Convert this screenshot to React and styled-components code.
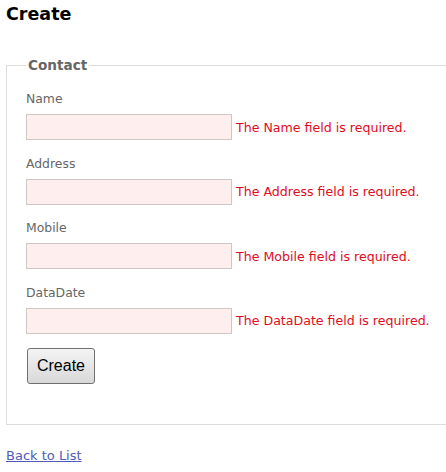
import React from "react";
import styled, { createGlobalStyle } from "styled-components";

const GlobalStyle = createGlobalStyle`
  html, body {
    margin: 0;
    padding: 0;
    background: #fff;
  }
  body {
    padding: 0 6px;
    font-family: "DejaVu Sans", Verdana, sans-serif;
    color: #555;
  }
`;

const Title = styled.h2`
  margin: 0;
  padding-top: 2px;
  font-size: 17.5px;
  line-height: 24px;
  font-weight: bold;
  color: #000;
`;

const Fieldset = styled.fieldset`
  margin: 29px 0 0 0;
  padding: 0 19px 40px 19px;
  border: 1px solid #dcdcdc;
  width: 400px;
`;

const Legend = styled.legend`
  padding: 0 2px;
  font-size: 13.6px;
  line-height: 20px;
  font-weight: bold;
  color: #666;
`;

const Field = styled.div`
  margin-top: ${(p) => (p.$first ? "15px" : "14.5px")};
`;

const Label = styled.label`
  display: block;
  font-size: 12.4px;
  line-height: 17px;
  color: #666;
`;

const Row = styled.div`
  display: flex;
  align-items: center;
  margin-top: 7px;
`;

const Input = styled.input`
  box-sizing: border-box;
  width: 206px;
  height: 26px;
  margin: 0;
  border: 1px solid #cfc6c6;
  background: #ffeeee;
  font-family: inherit;
`;

const Error = styled.span`
  margin-left: 4px;
  font-size: 12.6px;
  color: #e00c1c;
  white-space: nowrap;
`;

const Button = styled.button`
  margin: 14.5px 0 0 1px;
  width: 68px;
  height: 36px;
  padding: 0;
  border: 1px solid #707070;
  border-radius: 3px;
  background: linear-gradient(#f4f4f4, #e6e6e6 50%, #d8d8d8);
  font-family: "Liberation Sans", Arial, sans-serif;
  font-size: 16px;
  color: #000;
`;

const Footer = styled.div`
  margin-top: 22px;
  font-size: 13px;
  line-height: 18px;
`;

const Link = styled.a`
  color: #505abc;
  text-decoration: underline;
`;

const fields = ["Name", "Address", "Mobile", "DataDate"];

export default function App() {
  return (
    <>
      <GlobalStyle />
      <Title>Create</Title>
      <Fieldset>
        <Legend>Contact</Legend>
        {fields.map((f, i) => (
          <Field key={f} $first={i === 0}>
            <Label>{f}</Label>
            <Row>
              <Input type="text" />
              <Error>The {f} field is required.</Error>
            </Row>
          </Field>
        ))}
        <Button>Create</Button>
      </Fieldset>
      <Footer>
        <Link href="#">Back to List</Link>
      </Footer>
    </>
  );
}
